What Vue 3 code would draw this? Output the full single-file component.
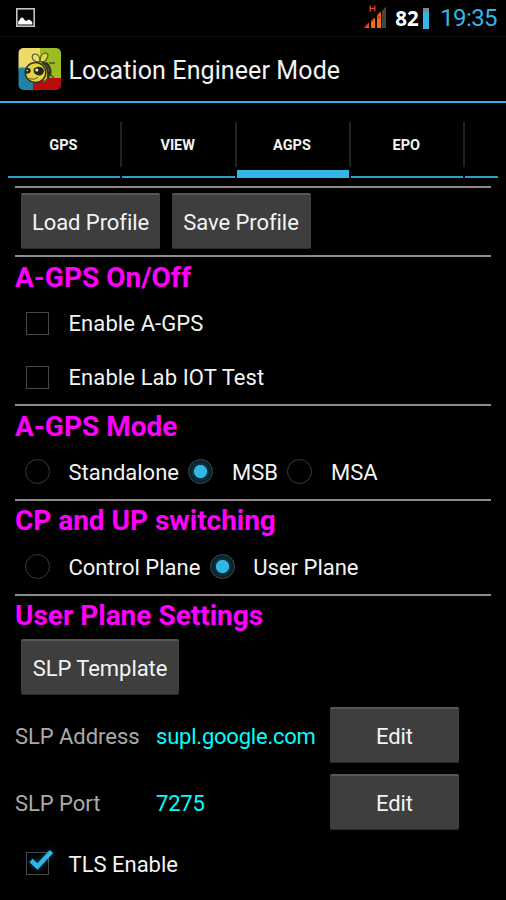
<script setup>
import { ref } from 'vue'

const tabs = ['GPS', 'VIEW', 'AGPS', 'EPO']
const activeTab = ref('AGPS')
const toggles = ref([
  { label: 'Enable A-GPS', on: false },
  { label: 'Enable Lab IOT Test', on: false },
])
const modes = ['Standalone', 'MSB', 'MSA']
const mode = ref('MSB')
const planes = ['Control Plane', 'User Plane']
const plane = ref('User Plane')
const fields = [
  { label: 'SLP Address', value: 'supl.google.com' },
  { label: 'SLP Port', value: '7275' },
]
const tls = ref(true)
</script>

<template>
  <div class="screen">
    <header class="status">
      <svg class="picture" width="20" height="20" viewBox="0 0 20 20">
        <rect x=".8" y=".8" width="17.4" height="17.4" fill="#050505" stroke="#c4c4c4" stroke-width="1.6" />
        <path d="M2.2 16.5v-3l1.5-1.5 1-2 1.5-.6 1.5 1 1.2 2 2 .3 1.6-1.2 2 .8 1.8 2v2.2z" fill="#fff" />
      </svg>
      <div class="status-right">
        <svg class="signal" width="24" height="26" viewBox="0 0 24 26">
          <path d="M0 25L5 20V25z" fill="#f4501c" />
          <path d="M7 25V18.5L11 14.5V25z" fill="#fa6a10" />
          <path d="M13 25V12.5L17 8.5V25z" fill="#fa6a10" />
          <path d="M18 25V8L22 3.5V25z" fill="#444" />
          <path d="M1 24l4-4M7 18.5l3-3M13 12.5l3-3M15 16v-3" stroke="#d51b16" stroke-width="1.3" fill="none" />
          <path d="M6.2 2.5v6M10.8 2.5v6M6.2 5.3h4.6" stroke="#f24a18" stroke-width="1.2" fill="none" />
        </svg>
        <span class="percent">82</span>
        <span class="battery"></span>
        <span class="clock">19:35</span>
      </div>
    </header>

    <div class="action">
      <svg class="logo" width="44" height="44" viewBox="0 0 44 44">
        <defs>
          <clipPath id="tile"><rect x=".5" y="1" width="42.5" height="42" rx="5" /></clipPath>
        </defs>
        <g clip-path="url(#tile)">
          <rect width="22" height="22" fill="#eddb68" />
          <rect x="22" width="22" height="32" fill="#99bd22" />
          <rect y="20.5" width="16" height="24" fill="#2183a8" />
          <rect x="15" y="31" width="29" height="13" fill="#b90d0b" />
        </g>
        <g stroke="#55552c" stroke-width="1.2" stroke-linejoin="round">
          <path d="M19 15C13 13 13 7 17 7c4 0 5 5 5 8z" fill="#e9df62" />
          <path d="M22 15c0-5 2-9 6-9 4 1 1 7-3 10z" fill="#dcd746" />
          <path d="M31 16h6M33 28l3 3" fill="none" stroke-width="1.6" />
          <path d="M19 15c8-2 13 3 14 9l-2 6-5 5z" fill="#e1cf31" />
          <path d="M24 15c5 3 7 9 6 17M28 15.5c4 4 5 8 4 13" fill="none" stroke-width="2.2" stroke="#33351e" />
          <ellipse cx="17.5" cy="25.5" rx="10.3" ry="10" fill="#e6d43f" stroke="#33351e" stroke-width="1.5" />
        </g>
        <path d="M7.8 21.5c3-1 5 0 5 2.500-1 2.500-3 3-5 2.500z" fill="#24251f" />
        <path d="M16 21.500c4-3 9-2 10 2 0 5-5 6-8 4-2-1-3-3-2-6z" fill="#24251f" />
        <circle cx="18.800" cy="23" r="1.500" fill="#fff3b5" />
        <circle cx="9.300" cy="23.500" r=".8" fill="#fff3b5" />
        <path d="M11 31.500q5 2 9-1" fill="none" stroke="#605522" />
      </svg>
      <h1 class="title">Location Engineer Mode</h1>
    </div>

    <nav class="tabs">
      <div v-for="t in tabs" :key="t" class="tab" :class="{ active: t === activeTab }" @click="activeTab = t">
        <span>{{ t }}</span>
      </div>
      <div class="tab rest"></div>
    </nav>

    <main class="content">
      <section class="block profile">
        <button class="btn">Load Profile</button>
        <button class="btn">Save Profile</button>
      </section>

      <section class="block onoff">
        <h2>A-GPS On/Off</h2>
        <div v-for="c in toggles" :key="c.label" class="row" @click="c.on = !c.on">
          <span class="box"></span>
          <span class="label">{{ c.label }}</span>
        </div>
      </section>

      <section class="block choice">
        <h2>A-GPS Mode</h2>
        <div class="row">
          <div v-for="m in modes" :key="m" class="option" @click="mode = m">
            <span class="radio" :class="{ on: m === mode }"></span>
            <span class="label">{{ m }}</span>
          </div>
        </div>
      </section>

      <section class="block choice plane">
        <h2>CP and UP switching</h2>
        <div class="row">
          <div v-for="p in planes" :key="p" class="option" @click="plane = p">
            <span class="radio" :class="{ on: p === plane }"></span>
            <span class="label">{{ p }}</span>
          </div>
        </div>
      </section>

      <section class="block settings">
        <h2>User Plane Settings</h2>
        <button class="btn template">SLP Template</button>
        <div v-for="f in fields" :key="f.label" class="field">
          <span class="name">{{ f.label }}</span>
          <span class="value">{{ f.value }}</span>
          <button class="btn">Edit</button>
        </div>
        <div class="row tls" @click="tls = !tls">
          <span class="box">
            <svg v-if="tls" class="tick" width="34" height="30" viewBox="0 0 34 30">
              <path d="M8 15.5l6.500 6L28.500 6.500" fill="none" stroke="#33b5e5" stroke-width="4.600" />
            </svg>
          </span>
          <span class="label">TLS Enable</span>
        </div>
      </section>
    </main>
  </div>
</template>

<style>
body { background: #000; }
</style>

<style scoped>
* { box-sizing: border-box; }
.screen {
  width: 506px;
  height: 900px;
  overflow: hidden;
  background: #000;
  color: #f3f3f3;
  font-family: Roboto, sans-serif;
  font-size: 22px;
  letter-spacing: 0;
  white-space: nowrap;
}
.status {
  height: 37px;
  display: flex;
  justify-content: space-between;
  border-bottom: 1px solid #0d0d0d;
  padding: 0 9px 0 16px;
}
.picture { margin-top: 8px; }
.status-right { display: flex; }
.signal { margin: 3px 7px 0 0; }
.percent {
  width: 27px;
  font: 700 20.5px/36px "Open Sans", sans-serif;
  color: #fff;
}
.battery {
  width: 6px;
  height: 21px;
  margin: 8px 11px 0 1px;
  background: linear-gradient(#888 0 4px, #33b5e5 4px);
}
.clock {
  font-size: 24px;
  font-weight: 400;
  line-height: 37px;
  letter-spacing: -0.6px;
  color: #33b5e5;
}
.action {
  height: 66px;
  display: flex;
  align-items: center;
  padding-left: 18px;
  border-bottom: 2px solid #33b5e5;
}
.title {
  margin: 4px 0 0 6.5px;
  font-size: 25px;
  font-weight: 400;
  line-height: 32px;
  letter-spacing: 0.1px;
}
.tabs {
  display: flex;
  gap: 2px;
  height: 75px;
  padding: 0 8px;
}
.tab {
  position: relative;
  width: 112.3px;
  border-bottom: 2px solid #2a9fca;
  display: flex;
  justify-content: center;
  padding: 33px 1.5px 0 0;
  font-size: 14.5px;
  font-weight: 700;
  line-height: 20px;
}
.tab.active { border-bottom: 8px solid #33b5e5; }
.tab + .tab::before {
  content: "";
  position: absolute;
  left: -2px;
  top: 19px;
  width: 2px;
  height: 45px;
  background: #222;
}
.tab.rest { flex: 1; }
.content { padding: 7.5px 15px 0; }
.block { border-top: 2px solid #8c8c8c; }
.btn {
  height: 56px;
  padding: 2px 0 0;
  border: 0;
  border-top: 2px solid #575757;
  border-bottom: 1px solid #2b2b2b;
  border-radius: 2px;
  background: #3e3e3e;
  color: #f3f3f3;
  font: inherit;
  letter-spacing: -0.06px;
}
.profile {
  height: 69.5px;
  padding: 5.5px 6px;
  display: flex;
  gap: 11.5px;
}
.profile .btn { width: 139px; }
h2 {
  margin: 0;
  height: 40px;
  padding-top: 1px;
  font-size: 28px;
  font-weight: 700;
  line-height: 40px;
  color: #f0f;
}
.onoff { height: 149px; }
.choice { height: 94.75px; }
.row {
  height: 54px;
  display: flex;
  align-items: center;
  padding-left: 11px;
}
.onoff h2 { height: 39px; }
.choice h2 { height: 39px; }
.plane h2, .settings h2 { padding-top: 0; }
.plane h2 { letter-spacing: -0.03px; }
.onoff .label { padding-top: 1px; letter-spacing: 0.1px; }
.plane .label { padding-top: 1px; }
.box {
  position: relative;
  width: 23px;
  height: 23px;
  border: 1px solid #484848;
}
.box + .label { margin-left: 19.5px; }
.tick {
  position: absolute;
  left: -4px;
  top: -8px;
  filter: drop-shadow(0 0 3px rgba(51, 181, 229, 0.45));
}
.option { display: flex; align-items: center; margin-right: 10.5px; }
.radio {
  width: 25px;
  height: 25px;
  margin: -1px 18.5px 0 -1px;
  border: 1px solid #3a3a3a;
  border-radius: 50%;
}
.radio.on {
  border: 1.5px solid #46494a;
  background: radial-gradient(circle, #33b5e5 0 6.2px, #0c3440 7px, #062029 11px);
}
.template { display: block; width: 158px; margin: 3.5px 0 0 6px; }
.field {
  height: 56px;
  margin-top: 11.5px;
  display: grid;
  grid-template-columns: 141px 174px 129px;
  align-items: center;
}
.name, .value { padding-top: 3px; }
.name { color: #aaa; letter-spacing: -0.05px; }
.value { color: #0ff; letter-spacing: -0.22px; }
.tls { margin-top: 6px; }
.tls .label { padding-top: 2px; }
</style>
